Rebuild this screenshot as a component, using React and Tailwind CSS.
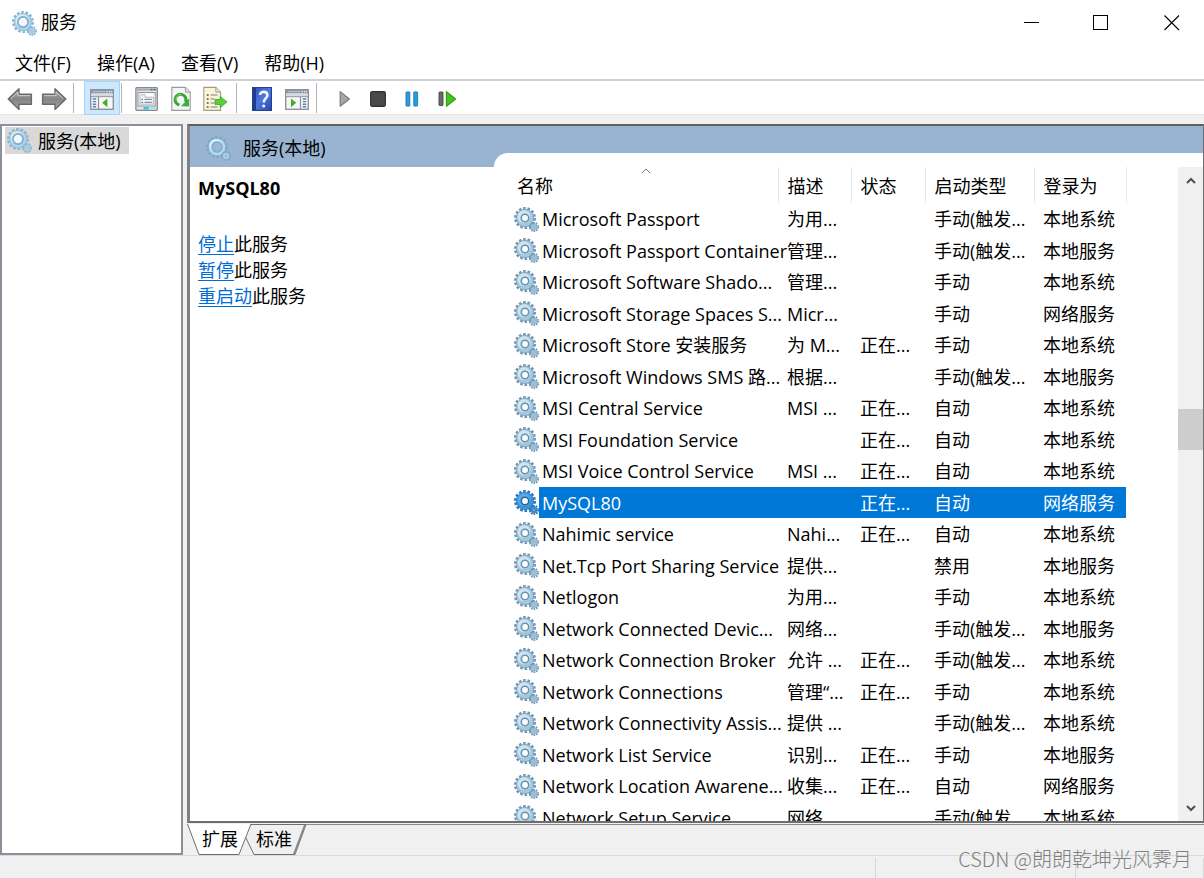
import clsx from "clsx";

const MENUS = ["文件(F)", "操作(A)", "查看(V)", "帮助(H)"];

const SERVICES = [
  { name: "Microsoft Passport", desc: "为用...", status: "", startup: "手动(触发...", logon: "本地系统" },
  { name: "Microsoft Passport Container", desc: "管理...", status: "", startup: "手动(触发...", logon: "本地服务" },
  { name: "Microsoft Software Shado...", desc: "管理...", status: "", startup: "手动", logon: "本地系统" },
  { name: "Microsoft Storage Spaces S...", desc: "Micr...", status: "", startup: "手动", logon: "网络服务" },
  { name: "Microsoft Store 安装服务", desc: "为 M...", status: "正在...", startup: "手动", logon: "本地系统" },
  { name: "Microsoft Windows SMS 路...", desc: "根据...", status: "", startup: "手动(触发...", logon: "本地服务" },
  { name: "MSI Central Service", desc: "MSI ...", status: "正在...", startup: "自动", logon: "本地系统" },
  { name: "MSI Foundation Service", desc: "", status: "正在...", startup: "自动", logon: "本地系统" },
  { name: "MSI Voice Control Service", desc: "MSI ...", status: "正在...", startup: "自动", logon: "本地系统" },
  { name: "MySQL80", desc: "", status: "正在...", startup: "自动", logon: "网络服务" },
  { name: "Nahimic service", desc: "Nahi...", status: "正在...", startup: "自动", logon: "本地系统" },
  { name: "Net.Tcp Port Sharing Service", desc: "提供...", status: "", startup: "禁用", logon: "本地服务" },
  { name: "Netlogon", desc: "为用...", status: "", startup: "手动", logon: "本地系统" },
  { name: "Network Connected Devic...", desc: "网络...", status: "", startup: "手动(触发...", logon: "本地服务" },
  { name: "Network Connection Broker", desc: "允许 ...", status: "正在...", startup: "手动(触发...", logon: "本地系统" },
  { name: "Network Connections", desc: "管理“...", status: "正在...", startup: "手动", logon: "本地系统" },
  { name: "Network Connectivity Assis...", desc: "提供 ...", status: "", startup: "手动(触发...", logon: "本地系统" },
  { name: "Network List Service", desc: "识别...", status: "正在...", startup: "手动", logon: "本地服务" },
  { name: "Network Location Awarene...", desc: "收集...", status: "正在...", startup: "自动", logon: "网络服务" },
  { name: "Network Setup Service", desc: "网络...", status: "", startup: "手动(触发...", logon: "本地系统" },
];

const SELECTED = "MySQL80";

const ACTIONS = ["停止", "暂停", "重启动"];

const GEAR_TONES = {
  list: { teeth: "#7398b4", body: "#a3c8e0", shine: "#cfe4f1", rim: "#6a93b0", hole: "#ffffff", r: 2.8 },
  selected: { teeth: "#2878be", body: "#3f92d6", shine: "#5ba7e2", rim: "#1f68a8", hole: "#ffffff", r: 2.8 },
  light: { teeth: "#8fb4cd", body: "#acd6ee", shine: "#d4edf9", rim: "#7dabc9", hole: "#f4f8fa", r: 4.2 },
  header: { teeth: "#7fa6c6", body: "#b4dcf0", shine: "#def2fb", rim: "#82afce", hole: "#9db7d3", r: 4.2 },
};

function GearIcon({ tone = "list" }) {
  const t = GEAR_TONES[tone];
  return (
    <svg viewBox="0 0 25 25" className="block size-[25px] shrink-0" aria-hidden="true">
      <circle cx="11" cy="11" r="9.6" fill="none" stroke={t.teeth} strokeWidth="2.8" strokeDasharray="2.6 1.71" />
      <circle cx="11" cy="11" r="8.7" fill={t.body} stroke={t.teeth} strokeWidth="0.7" />
      <circle cx="10" cy="9.6" r="6.4" fill={t.shine} />
      <circle cx="11" cy="11" r={t.r + 0.9} fill={t.hole} stroke={t.rim} strokeWidth="1.6" />
      <circle cx="20" cy="20" r="4" fill="none" stroke={t.teeth} strokeWidth="2.2" strokeDasharray="1.5 1.01" />
      <circle cx="20" cy="20" r="3.2" fill={t.body} stroke={t.teeth} strokeWidth="0.5" />
      <circle cx="20" cy="20" r="1.1" fill={t.hole} stroke={t.rim} strokeWidth="0.7" />
    </svg>
  );
}

function ArrowIcon({ flip }) {
  return (
    <svg viewBox="0 0 26 24" className={clsx("block h-6 w-[26px]", flip && "-scale-x-100")} aria-hidden="true">
      <defs>
        <linearGradient id="arrow" x1="0" y1="0" x2="0" y2="1">
          <stop offset="0" stopColor="#b4b4b4" />
          <stop offset="0.5" stopColor="#858585" />
          <stop offset="1" stopColor="#a4a4a4" />
        </linearGradient>
      </defs>
      <path
        d="M1.2 12 L12 1.8 V7.2 H24.4 V17.2 H12 V22.4 Z"
        fill="url(#arrow)"
        stroke="#6a6a6a"
        strokeWidth="1.4"
        strokeLinejoin="round"
      />
      <path d="M4 11.6 L11 5 V8.6 H23" fill="none" stroke="#cfcfcf" strokeWidth="0.9" />
    </svg>
  );
}

function PaneIcon({ mirrored }) {
  return (
    <svg viewBox="0 0 24 22" className="block h-[22px] w-6" aria-hidden="true">
      <rect x="0.7" y="1.7" width="22.6" height="19.6" fill="#f7f7f7" stroke="#8c939b" strokeWidth="1.4" />
      <rect x="1" y="2" width="22" height="3.4" fill="#8c98a6" />
      <path d="M3 3.6 H15" stroke="#b9c3ce" strokeWidth="1" />
      <path d="M16.5 3.6 h1.4 M19 3.6 h1.4 M21.2 3.6 h1" stroke="#eef2f6" strokeWidth="1.3" />
      <rect x="1.4" y="5.8" width="21.2" height="2.4" fill="#d5dae0" />
      <path d="M1 8.7 H23" stroke="#8c939b" strokeWidth="1" />
      {mirrored ? (
        <>
          <path d="M15.5 9 V21" stroke="#8c939b" strokeWidth="1.2" />
          <path d="M17.8 11 h3.4 M17.8 13.6 h3.4 M17.8 16.2 h3.4 M17.8 18.8 h3.4" stroke="#4f83b8" strokeWidth="1.4" />
          <path d="M6 10.4 L11.2 14.8 L6 19.2 Z" fill="#3fae2a" />
        </>
      ) : (
        <>
          <path d="M8.5 9 V21" stroke="#8c939b" strokeWidth="1.2" />
          <path d="M2.8 11 h3.4 M2.8 13.6 h3.4 M2.8 16.2 h3.4 M2.8 18.8 h3.4" stroke="#4f83b8" strokeWidth="1.4" />
          <path d="M17.4 10.4 L12.2 14.8 L17.4 19.2 Z" fill="#3fae2a" />
        </>
      )}
    </svg>
  );
}

function PropertiesIcon() {
  return (
    <svg viewBox="0 0 24 26" className="block h-[26px] w-6" aria-hidden="true">
      <rect x="0.9" y="1.7" width="21.4" height="22.6" rx="0.8" fill="#dfe3e6" stroke="#87898c" strokeWidth="1.3" />
      <path d="M2 3.6 H21.4" stroke="#a2a8ae" strokeWidth="2" />
      <path d="M16 3.6 h1.3 M18.8 3.6 h1.5" stroke="#4c555e" strokeWidth="1.4" />
      <rect x="3" y="6.6" width="17.2" height="13.4" fill="#fdfdfd" stroke="#8d9399" strokeWidth="1" />
      <path d="M5 8.8 h5 v2.4 h8.4 V18.2 H5 Z" fill="#f3f6f8" stroke="#a5abb2" strokeWidth="0.8" />
      <path d="M9.5 13.4 h7.4 M9.5 16.4 h7.4" stroke="#8191a2" strokeWidth="1.1" />
      <path d="M6.4 13.4 h1.6 M6.4 16.4 h1.6" stroke="#3a8ed0" strokeWidth="1.3" />
      <rect x="8.6" y="21" width="5.2" height="2.6" fill="#39c3ee" />
      <rect x="15.4" y="21" width="5.2" height="2.6" fill="#a9dff1" />
    </svg>
  );
}

function RefreshIcon() {
  return (
    <svg viewBox="0 0 20 26" className="block h-[26px] w-5" aria-hidden="true">
      <path d="M0.8 1.4 H14.4 L19.2 6.2 V24.4 H0.8 Z" fill="#f4f4f4" stroke="#9b9b9b" strokeWidth="1.1" />
      <path d="M14.4 1.4 V6.2 H19.2" fill="#dedede" stroke="#9b9b9b" strokeWidth="0.9" />
      <path d="M8.4 19 A5.4 5.4 0 1 1 14.4 16" fill="none" stroke="#35a636" strokeWidth="3" />
      <path d="M10.8 19.8 L17.6 20 L17.4 13.2 Z" fill="#38b038" stroke="#38b038" strokeLinejoin="round" />
      <path d="M5 14.4 A5.2 5.2 0 0 1 10.2 8.4" fill="none" stroke="#7ed87a" strokeWidth="1" />
    </svg>
  );
}

function ExportIcon() {
  return (
    <svg viewBox="0 0 25 26" className="block h-[26px] w-[25px]" aria-hidden="true">
      <path d="M0.8 1.4 H12.8 L17.6 6.2 V24.4 H0.8 Z" fill="#fbf5d6" stroke="#a19d8d" strokeWidth="1.1" />
      <path d="M12.8 1.4 V6.2 H17.6" fill="#e8e1c0" stroke="#a19d8d" strokeWidth="0.9" />
      <path d="M3.8 9 h1.8 M3.8 13 h1.8 M3.8 17 h1.8 M3.8 21 h1.8" stroke="#4a4a52" strokeWidth="1.5" />
      <path d="M7.6 9 h7 M7.6 13 h4 M7.6 17 h4 M7.6 21 h7" stroke="#7d7b94" strokeWidth="1.2" />
      <path
        d="M12 13.6 H17.2 V10.4 L24 16 L17.2 21.6 V18.4 H12 Z"
        fill="#5cd03c"
        stroke="#3da826"
        strokeWidth="0.9"
      />
    </svg>
  );
}

function HelpIcon() {
  return (
    <svg viewBox="0 0 20 26" className="block h-[26px] w-5" aria-hidden="true">
      <defs>
        <linearGradient id="book" x1="0" y1="0" x2="1" y2="1">
          <stop offset="0" stopColor="#2b4fb4" />
          <stop offset="0.5" stopColor="#4e78dc" />
          <stop offset="1" stopColor="#2544a4" />
        </linearGradient>
      </defs>
      <rect x="0.5" y="1.5" width="19" height="23" fill="url(#book)" stroke="#223f93" />
      <rect x="1" y="2" width="3" height="22" fill="#203b8e" />
      <path
        d="M8 9 C8 4.8 15.4 4.8 15.4 9.2 C15.4 12.4 11.8 12.4 11.8 16.4"
        fill="none"
        stroke="#eef3ff"
        strokeWidth="2.6"
      />
      <circle cx="11.7" cy="20" r="1.6" fill="#eef3ff" />
    </svg>
  );
}

function PlayIcon() {
  return (
    <svg viewBox="0 0 12 18" className="block h-[18px] w-3" aria-hidden="true">
      <path d="M1.2 1.6 L10.4 9 L1.2 16.2 Z" fill="#a6a6a6" stroke="#7c7c7c" strokeWidth="1.2" strokeLinejoin="round" />
    </svg>
  );
}

function StopIcon() {
  return (
    <svg viewBox="0 0 16 16" className="block size-4" aria-hidden="true">
      <rect x="0.6" y="0.6" width="14.8" height="14.8" rx="1.6" fill="#4a4a4a" stroke="#2f2f2f" strokeWidth="1.1" />
    </svg>
  );
}

function PauseIcon() {
  return (
    <svg viewBox="0 0 14 16" className="block h-4 w-[14px]" aria-hidden="true">
      <rect x="1" y="0.9" width="3.8" height="14.2" rx="0.6" fill="#2b9be0" stroke="#1874b8" strokeWidth="0.9" />
      <rect x="8.8" y="0.9" width="3.8" height="14.2" rx="0.6" fill="#2b9be0" stroke="#1874b8" strokeWidth="0.9" />
    </svg>
  );
}

function RestartIcon() {
  return (
    <svg viewBox="0 0 19 18" className="block h-[18px] w-[19px]" aria-hidden="true">
      <rect x="1" y="2" width="4" height="13.6" rx="0.6" fill="#6a6a6a" stroke="#444444" strokeWidth="0.9" />
      <path d="M8.4 1.6 L17.6 9 L8.4 16.2 Z" fill="#43c61e" stroke="#2f9a14" strokeWidth="1.1" strokeLinejoin="round" />
    </svg>
  );
}

function ToolButton({ label, active, children }) {
  return (
    <button
      type="button"
      aria-label={label}
      aria-pressed={active}
      className={clsx(
        "flex h-[34px] shrink-0 items-center justify-center pt-px",
        active && "w-9 border border-[#a6d5fa] bg-[#cce8ff]"
      )}
    >
      {children}
    </button>
  );
}

function Separator() {
  return <div className="h-[30px] w-px shrink-0 bg-[#b4b4b4]" />;
}

function TitleBar() {
  return (
    <header className="flex h-[46px] shrink-0 items-center bg-white pl-3">
      <GearIcon tone="light" />
      <h1 className="ml-1 pb-[2px] text-[18px]">服务</h1>
      <div className="ml-auto flex items-center">
        <button type="button" aria-label="最小化" className="flex h-[46px] w-[60px] items-center justify-center">
          <svg viewBox="0 0 16 16" className="size-4" shapeRendering="crispEdges">
            <path d="M0 7.5 H15" stroke="#000" />
          </svg>
        </button>
        <button type="button" aria-label="最大化" className="flex h-[46px] w-[78px] items-center justify-center">
          <svg viewBox="0 0 16 16" className="size-4" shapeRendering="crispEdges">
            <rect x="0.5" y="0.5" width="14" height="14" fill="none" stroke="#000" />
          </svg>
        </button>
        <button type="button" aria-label="关闭" className="flex h-[46px] w-16 items-center justify-center">
          <svg viewBox="0 0 16 16" className="size-4">
            <path d="M0.5 0.5 L15 15 M15 0.5 L0.5 15" stroke="#000" strokeWidth="1.1" />
          </svg>
        </button>
      </div>
    </header>
  );
}

function MenuBar() {
  return (
    <nav className="flex h-[33px] shrink-0 items-center gap-[26px] bg-white pt-px pl-[15px]">
      {MENUS.map((m) => (
        <button key={m} type="button" className="text-[18px]">
          {m}
        </button>
      ))}
    </nav>
  );
}

function Toolbar() {
  return (
    <div className="flex h-9 shrink-0 items-center border-t-2 border-b border-t-[#cfcfd4] border-b-[#e6e6e6] bg-white pt-px pl-[7px]">
      <div className="flex gap-2">
        <ToolButton label="后退"><ArrowIcon /></ToolButton>
        <ToolButton label="前进"><ArrowIcon flip /></ToolButton>
      </div>
      <div className="ml-[6px] flex items-center">
        <Separator />
        <div className="mr-px ml-[10px]">
          <ToolButton label="显示/隐藏控制台树" active><PaneIcon /></ToolButton>
        </div>
        <Separator />
      </div>
      <div className="mr-2 ml-[13px] flex gap-3">
        <ToolButton label="属性"><PropertiesIcon /></ToolButton>
        <ToolButton label="刷新"><RefreshIcon /></ToolButton>
        <ToolButton label="导出列表"><ExportIcon /></ToolButton>
      </div>
      <Separator />
      <div className="mr-[7px] ml-[15px] flex gap-[13px]">
        <ToolButton label="帮助"><HelpIcon /></ToolButton>
        <ToolButton label="显示/隐藏操作窗格"><PaneIcon mirrored /></ToolButton>
      </div>
      <Separator />
      <div className="ml-[22px] flex gap-[19px]">
        <ToolButton label="启动服务"><PlayIcon /></ToolButton>
        <ToolButton label="停止服务"><StopIcon /></ToolButton>
        <ToolButton label="暂停服务"><PauseIcon /></ToolButton>
        <ToolButton label="重启动服务"><RestartIcon /></ToolButton>
      </div>
    </div>
  );
}

function ConsoleTree() {
  return (
    <aside className="w-[183px] shrink-0 border-2 border-[#8b909b] bg-white pt-px">
      <button type="button" className="ml-[3px] flex h-[27px] w-[124px] items-center bg-[#d9d9d9] pl-[2px]">
        <GearIcon tone="light" />
        <span className="ml-[6px] pt-px text-[18px] whitespace-nowrap">服务(本地)</span>
      </button>
    </aside>
  );
}

function ServiceDetails() {
  return (
    <section className="flex w-[304px] shrink-0 flex-col bg-white">
      <div className="flex h-[41px] shrink-0 items-center bg-[#99b4d1] pt-[3px] pl-4">
        <GearIcon tone="header" />
        <span className="ml-3 text-[18px]">服务(本地)</span>
      </div>
      <div className="px-2 pt-2 text-[18px] leading-[26px]">
        <h2 className="font-bold">{SELECTED}</h2>
        <ul className="mt-[30px]">
          {ACTIONS.map((a) => (
            <li key={a}>
              <a href="#" className="text-[#006cd8] underline underline-offset-3">{a}</a>此服务
            </li>
          ))}
        </ul>
      </div>
    </section>
  );
}

function ServiceTable() {
  return (
    <table className="w-[621px] table-fixed border-collapse self-start text-left text-[18px] leading-6 whitespace-nowrap">
      <colgroup>
        <col className="w-[34px]" />
        <col className="w-[239px]" />
        <col className="w-[73px]" />
        <col className="w-[74px]" />
        <col className="w-[109px]" />
        <col className="w-[92px]" />
      </colgroup>
      <thead>
        <tr className="h-9">
          <th colSpan={2} className="relative border-r border-[#e8e8e8] p-0 pt-[2px] pl-3 font-normal" aria-sort="ascending">
            名称
            <svg viewBox="0 0 10 6" className="absolute top-px left-1/2 h-[6px] w-[10px]" aria-hidden="true">
              <path d="M1 5 L5 1 L9 5" fill="none" stroke="#7a7a7a" />
            </svg>
          </th>
          {["描述", "状态", "启动类型", "登录为"].map((h) => (
            <th key={h} className="border-r border-[#e8e8e8] p-0 pt-[2px] pl-[9px] font-normal">{h}</th>
          ))}
        </tr>
      </thead>
      <tbody>
        {SERVICES.map((s) => {
          const selected = s.name === SELECTED;
          const cell = clsx("p-0 pl-[9px]", selected && "bg-[#0078d7] text-white");
          return (
            <tr key={s.name} className="odd:h-8 even:h-[31px]">
              <td className="p-0 pl-[9px]">
                <GearIcon tone={selected ? "selected" : "list"} />
              </td>
              <td className={clsx("p-0 pl-[3px]", selected && "bg-[#0078d7] text-white")}>{s.name}</td>
              <td className={cell}>{s.desc}</td>
              <td className={cell}>{s.status}</td>
              <td className={cell}>{s.startup}</td>
              <td className={cell}>{s.logon}</td>
            </tr>
          );
        })}
      </tbody>
    </table>
  );
}

function ScrollBar() {
  return (
    <div className="flex w-[25px] shrink-0 flex-col bg-[#f0f0f0]">
      <button type="button" aria-label="向上滚动" className="flex h-[26px] items-center justify-center">
        <svg viewBox="0 0 10 7" className="h-[7px] w-[10px]">
          <path d="M1 6 L5 2 L9 6" fill="none" stroke="#505050" strokeWidth="2" />
        </svg>
      </button>
      <div className="flex flex-1 flex-col">
        <div className="grow-[216]" />
        <div className="h-[41px] bg-[#cdcdcd]" />
        <div className="grow-[344]" />
      </div>
      <button type="button" aria-label="向下滚动" className="flex h-[26px] items-center justify-center">
        <svg viewBox="0 0 10 7" className="h-[7px] w-[10px]">
          <path d="M1 1 L5 5 L9 1" fill="none" stroke="#505050" strokeWidth="2" />
        </svg>
      </button>
    </div>
  );
}

function ViewTabs() {
  return (
    <div role="tablist" className="relative flex h-[31px] shrink-0 border-t border-[#8a8a8a] text-[18px]">
      <svg viewBox="0 0 120 31" className="absolute -top-px left-0 h-[31px] w-[120px]" aria-hidden="true">
        <path d="M63 0.5 H119 L108 30.5 H67 L56 8" fill="#f0f0f0" stroke="#6e6e6e" />
        <path d="M118 1 L107 30" stroke="#8a8a8a" strokeWidth="2" />
        <path d="M0.5 0 L12 30.5 H52 L64 0" fill="#ffffff" stroke="#6e6e6e" />
      </svg>
      <button type="button" role="tab" aria-selected="true" className="relative ml-[15px] w-9 pb-[2px]">扩展</button>
      <button type="button" role="tab" aria-selected="false" className="relative ml-[18px] w-9 pb-[2px]">标准</button>
    </div>
  );
}

function StatusBar() {
  return (
    <footer className="flex h-[23px] shrink-0 border-t border-[#dadada] pt-[2px]">
      <div className="flex-1 border-r border-[#d7d7d7]" />
      <div className="w-[200px] border-r border-[#d7d7d7]" />
      <div className="w-32 border-r border-[#d7d7d7]" />
    </footer>
  );
}

export default function App() {
  return (
    <div className="relative flex h-screen flex-col overflow-hidden bg-[#f0f0f0] font-['Open_Sans','Noto_Sans_CJK_SC',sans-serif] text-black">
      <TitleBar />
      <MenuBar />
      <Toolbar />
      <main className="flex min-h-0 flex-1 gap-1 pt-[9px]">
        <ConsoleTree />
        <div className="flex min-w-0 flex-1 flex-col">
          <div className="flex min-h-0 flex-1 border-t-2 border-r border-b-2 border-l-[3px] border-t-[#5f5f5f] border-r-[#6e6e6e] border-b-[#6e6e6e] border-l-[#808080] bg-[#99b4d1]">
            <ServiceDetails />
            <section className="mt-[27px] flex min-w-0 flex-1 overflow-hidden rounded-tl-[14px] bg-white pt-[14px]">
              <div className="min-w-0 flex-1 overflow-hidden pl-[11px]">
                <ServiceTable />
              </div>
              <ScrollBar />
            </section>
          </div>
          <div className="h-px shrink-0" />
          <ViewTabs />
        </div>
      </main>
      <StatusBar />
      <p className="absolute right-3 bottom-[7px] font-['Noto_Sans_CJK_SC',sans-serif] text-[20px] leading-6 font-light text-[#808080]">
        CSDN @朗朗乾坤光风霁月
      </p>
    </div>
  );
}
